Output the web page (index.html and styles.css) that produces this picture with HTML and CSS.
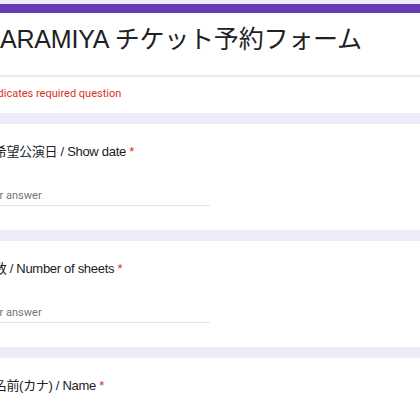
FILE: index.html
```html
<!DOCTYPE html>
<html lang="ja">
<head>
<meta charset="utf-8">
<title>ARAMIYA チケット予約フォーム</title>
<link rel="stylesheet" href="styles.css">
</head>
<body>
<div class="form">
  <section class="card header-card">
    <div class="title-block">
      <h1 class="form-title">ARAMIYA チケット予約フォーム</h1>
    </div>
    <div class="note-block">
      <p class="required-note">* Indicates required question</p>
    </div>
  </section>

  <section class="card question">
    <div class="q-title">ご希望公演日 / Show date <span class="star">*</span></div>
    <div class="answer"><span class="placeholder">Your answer</span></div>
  </section>

  <section class="card question">
    <div class="q-title">枚数 / Number of sheets <span class="star">*</span></div>
    <div class="answer"><span class="placeholder">Your answer</span></div>
  </section>

  <section class="card question">
    <div class="q-title">お名前(カナ) / Name <span class="star">*</span></div>
    <div class="answer"><span class="placeholder">Your answer</span></div>
  </section>
</div>
</body>
</html>
```

FILE: styles.css
```css
html, body {
  margin: 0;
  padding: 0;
  background: #f0ebf8;
  overflow: hidden;
}

.form {
  margin-left: -43px;
  width: 480px;
  padding-top: 4px;
  display: flex;
  flex-direction: column;
  gap: 11px;
}

.card {
  background: #ffffff;
  padding-left: 24px;
}

.header-card {
  border-top: 9px solid #673ab7;
}

.title-block {
  padding: 10px 0 20px 19px;
}

.form-title {
  margin: 0;
  font-family: "Liberation Sans", "Noto Sans CJK JP", sans-serif;
  font-weight: normal;
  font-size: 25px;
  line-height: 32px;
  letter-spacing: -0.2px;
  color: #202124;
  white-space: nowrap;
}

.note-block {
  border-top: 2px solid #ececec;
  padding: 9px 0 11px;
}

.required-note {
  margin: 0;
  font-family: Roboto, "Liberation Sans", sans-serif;
  font-size: 11px;
  line-height: 16px;
  color: #d93025;
}

.question {
  padding-top: 18px;
  padding-bottom: 24px;
}

.q-title {
  font-family: "Liberation Sans", "Noto Sans CJK JP", sans-serif;
  font-size: 13px;
  line-height: 20px;
  letter-spacing: -0.3px;
  color: #202124;
  white-space: nowrap;
}

.star {
  color: #d93025;
}

.answer {
  margin-top: 26px;
  width: 229px;
  padding-bottom: 1px;
  border-bottom: 1px solid #e2e2e2;
}

.placeholder {
  display: block;
  font-family: Roboto, "Liberation Sans", sans-serif;
  font-size: 11px;
  line-height: 16px;
  color: #70757a;
}
```
